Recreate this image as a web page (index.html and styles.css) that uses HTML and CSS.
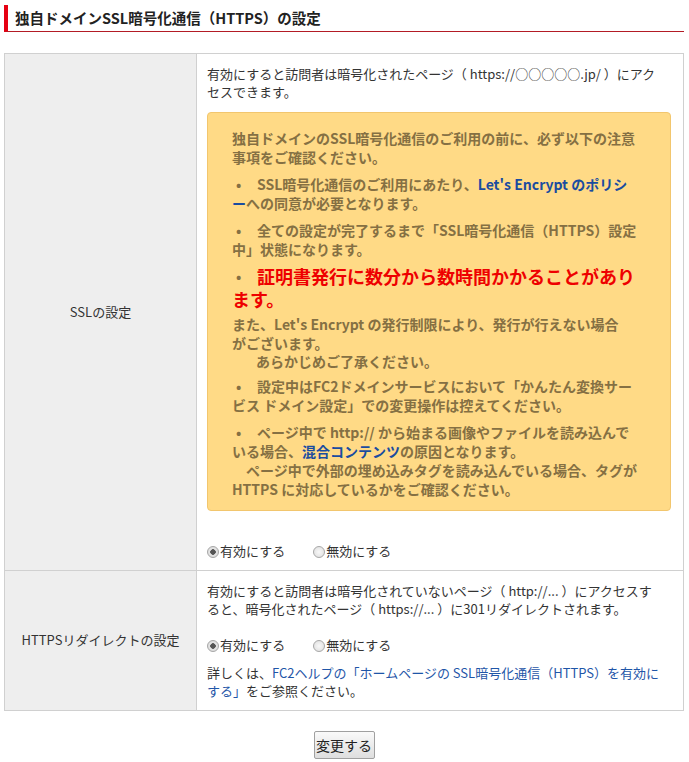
FILE: index.html
```html
<!DOCTYPE html>
<html lang="ja">
<head>
<meta charset="utf-8">
<title>独自ドメインSSL暗号化通信（HTTPS）の設定</title>
<link rel="stylesheet" href="styles.css">
</head>
<body>
<div class="page">
  <h2 class="title">独自ドメインSSL暗号化通信（HTTPS）の設定</h2>
  <table class="settings">
    <tr>
      <th>SSLの設定</th>
      <td>
        <p class="desc">有効にすると訪問者は暗号化されたページ（ https://○○○○○.jp/ ）にアク<br>セスできます。</p>
        <div class="notice">
          <p class="n-intro">独自ドメインのSSL暗号化通信のご利用の前に、必ず以下の注意<br>事項をご確認ください。</p>
          <p class="n-item"><span class="bullet">•</span>SSL暗号化通信のご利用にあたり、<a href="#" class="link">Let's Encrypt のポリシ<br>ー</a>への同意が必要となります。</p>
          <p class="n-item"><span class="bullet">•</span>全ての設定が完了するまで「SSL暗号化通信（HTTPS）設定<br>中」状態になります。</p>
          <div class="n-item n-warn">
            <p class="red"><span class="bullet">•</span>証明書発行に数分から数時間かかることがあり<br>ます。</p>
            <p class="after-red">また、Let's Encrypt の発行制限により、発行が行えない場合<br>がございます。<br><span class="indent2"></span>あらかじめご了承ください。</p>
          </div>
          <p class="n-item n-tight"><span class="bullet">•</span>設定中はFC2ドメインサービスにおいて「かんたん変換サー<br>ビス ドメイン設定」での変更操作は控えてください。</p>
          <p class="n-item"><span class="bullet">•</span>ページ中で http:// から始まる画像やファイルを読み込んで<br>いる場合、<a href="#" class="link">混合コンテンツ</a>の原因となります。<br><span class="indent1"></span>ページ中で外部の埋め込みタグを読み込んでいる場合、タグが<br>HTTPS に対応しているかをご確認ください。</p>
        </div>
        <div class="radios radios-ssl">
          <label class="radio"><input type="radio" name="ssl" checked><span>有効にする</span></label>
          <label class="radio"><input type="radio" name="ssl"><span>無効にする</span></label>
        </div>
      </td>
    </tr>
    <tr>
      <th>HTTPSリダイレクトの設定</th>
      <td>
        <p class="desc">有効にすると訪問者は暗号化されていないページ（ http://... ）にアクセスす<br>ると、暗号化されたページ（ https://... ）に301リダイレクトされます。</p>
        <div class="radios radios-redirect">
          <label class="radio"><input type="radio" name="redir" checked><span>有効にする</span></label>
          <label class="radio"><input type="radio" name="redir"><span>無効にする</span></label>
        </div>
        <p class="help">詳しくは、<a href="#" class="link-plain">FC2ヘルプの「ホームページの SSL暗号化通信（HTTPS）を有効に<br>する」</a>をご参照ください。</p>
      </td>
    </tr>
  </table>
  <div class="actions">
    <button type="button" class="submit">変更する</button>
  </div>
</div>
</body>
</html>
```
FILE: styles.css
```css
html, body {
  margin: 0;
  padding: 0;
  background: #fff;
}
body {
  font-family: "Noto Sans CJK JP", "Noto Sans", sans-serif;
  font-size: 13px;
  line-height: 18px;
  color: #333;
}
.page {
  width: 680px;
  padding: 5px 5px 0 4px;
}
.title {
  margin: 0;
  height: 26px;
  line-height: 26px;
  border-left: 4px solid #e60012;
  border-bottom: 1px solid #b31b25;
  padding-left: 7px;
  font-size: 14.5px;
  font-weight: bold;
  color: #222;
}
.settings {
  margin-top: 21px;
  width: 680px;
  border-collapse: collapse;
  table-layout: fixed;
}
.settings th,
.settings td {
  border: 1px solid #d0d0d0;
}
.settings th {
  width: 171px;
  background: #eee;
  font-weight: normal;
  text-align: center;
  vertical-align: middle;
  padding: 10px;
  color: #333;
}
.settings td {
  padding: 11px 10px 10px 10px;
  vertical-align: top;
}
.desc {
  margin: 0;
}
.notice {
  margin: 11px 2px 0 0;
  background: #ffda86;
  border: 1px solid #f2c66e;
  border-radius: 4px;
  padding: 16px 10px 11px 24px;
  font-size: 14px;
  font-weight: bold;
  line-height: 19px;
  color: #857043;
}
.notice p {
  margin: 0;
}
.notice .n-item {
  margin-top: 8px;
}
.notice .n-warn {
  margin-top: 6px;
}
.notice .n-tight {
  margin-top: 6px;
}
.bullet {
  display: inline-block;
  width: 21px;
  padding-left: 4px;
}
.notice .red {
  color: #ee0000;
  font-size: 18px;
  line-height: 23px;
}
.red .bullet {
  font-size: 14px;
  color: #857043;
  vertical-align: top;
}
.notice .after-red {
  margin-top: 4px;
  line-height: 18.5px;
}
.indent1 {
  display: inline-block;
  width: 14px;
}
.indent2 {
  display: inline-block;
  width: 24px;
}
.link {
  color: #1a4ca0;
  text-decoration: none;
}
.link-plain {
  color: #1f56a8;
  text-decoration: none;
}
.radios {
  display: flex;
  gap: 28px;
}
.radios-ssl {
  margin-top: 31px;
}
.radios-redirect {
  margin-top: 18px;
}
.radio {
  display: inline-flex;
  align-items: center;
}
.radio input {
  appearance: none;
  -webkit-appearance: none;
  width: 12px;
  height: 12px;
  margin: 0 1px 0 0;
  border: 1px solid #a8a8a8;
  border-radius: 50%;
  background: radial-gradient(circle, #f8f8f8 0, #dcdcdc 100%);
  box-sizing: border-box;
  position: relative;
  top: 1px;
}
.radio input:checked {
  background: radial-gradient(circle, #555 0, #555 2.5px, #e6e6e6 3px, #d4d4d4 100%);
}
.help {
  margin: 10px 0 0 0;
}
.actions {
  display: flex;
  justify-content: center;
  padding: 20px 0 0 0;
}
.submit {
  font-family: "Noto Sans CJK JP", sans-serif;
  font-size: 14px;
  color: #222;
  width: 61px;
  height: 28px;
  padding: 0;
  border: 1px solid #a0a0a0;
  border-radius: 2px;
  background: linear-gradient(#fafafa, #dedede);
}
```
